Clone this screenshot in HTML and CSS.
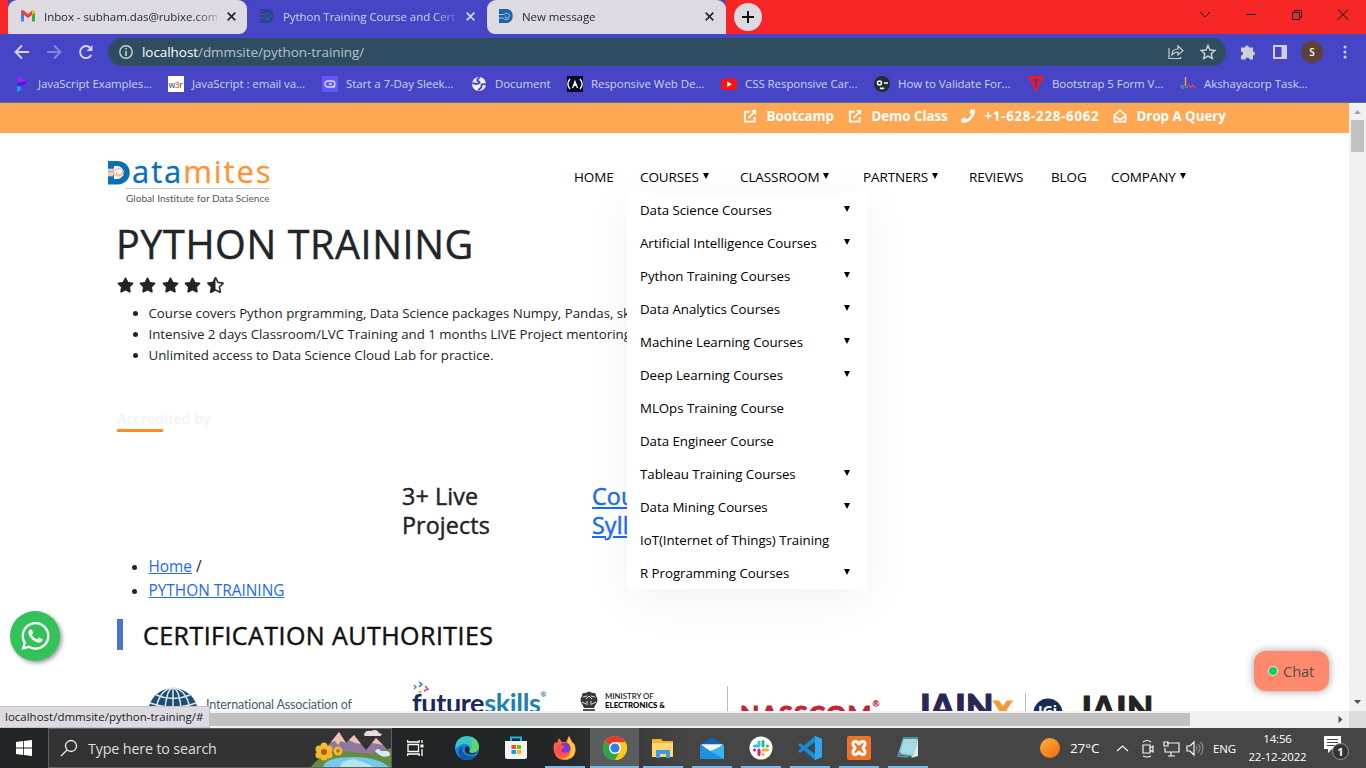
FILE: index.html
```html
<!DOCTYPE html>
<html lang="en">
<head>
<meta charset="utf-8">
<title>Python Training Course and Certification</title>
<link rel="stylesheet" href="styles.css">
</head>
<body>
<div class="desktop">
<header class="browser">
  <div class="tabstrip">
    <div class="tab tab-first">
      <svg class="fav" viewBox="0 0 16 16"><path d="M1 13.500V3.500L4 5.500V13.500z" fill="#4285f4"/><path d="M12 5.500L15 3.500V13.500H12z" fill="#34a853"/><path d="M1 3.500C1 2 3 2 4 2.700L8 6L12 2.700V7L8 10L1 5z" fill="#ea4335"/><path d="M12 2.700C13 2 15 2 15 3.500V5L12 7z" fill="#fbbc04"/></svg>
      <span class="tab-title ls-inbox">Inbox - subham.das@rubixe.com</span>
      <svg class="close" viewBox="0 0 9 9"><path d="M.7.7l7.600 7.600M8.300.7L.7 8.300"/></svg>
    </div>
    <div class="tab tab-active">
      <svg class="fav dim" viewBox="0 0 16 16"><path d="M1 1h7c9 0 9 14 0 14H1z" fill="#28448a"/><path d="M1 6.500h5c3-3 7 0 5 2.500s-5 0-3-1.500M1 10h4c2 2 4 2 6 .5" stroke="#3f68a8" fill="none"/></svg>
      <span class="tab-title ls-active">Python Training Course and Certification</span>
      <svg class="close" viewBox="0 0 9 9"><path d="M.7.7l7.600 7.600M8.300.7L.7 8.300"/></svg>
    </div>
    <div class="tab tab-last">
      <svg class="fav" viewBox="0 0 16 16"><path d="M1 1h7c9 0 9 14 0 14H1z" fill="#1e62ac"/><path d="M1 6.500h5c3-3 7 0 5 2.500s-5 0-3-1.500M1 10h4c2 2 4 2 6 .5" stroke="#9fbfe0" fill="none"/></svg>
      <span class="tab-title">New message</span>
      <svg class="close" viewBox="0 0 9 9"><path d="M.7.7l7.600 7.600M8.300.7L.7 8.300"/></svg>
    </div>
    <div class="newtab"><svg width="12" height="12" viewBox="0 0 12 12"><path d="M6 0v12M0 6h12" stroke="#111" stroke-width="2"/></svg></div>
    <svg class="winctl" width="144" height="12" viewBox="0 0 144 12" fill="none" stroke="#111"><path d="M1 4l5 5 5-5M47 6.500h10M93.500 4.500h7v7h-7zM95.500 4.500v-2h7v7h-2M139 1.500l10 10M149 1.500l-10 10"/></svg>
  </div>
  <div class="toolbar">
    <svg class="tb" viewBox="0 0 16 16"><path d="M15 8H2M8 1.500L1.500 8L8 14.500"/></svg>
    <svg class="tb faded" viewBox="0 0 16 16"><path d="M1 8h13M8 1.500L14.500 8L8 14.500"/></svg>
    <svg class="tb" viewBox="0 0 16 16"><path d="M13.300 11A6 6 0 1 1 12.500 4"/><path d="M14.500 1v6h-6z" fill="#cfcff0" stroke="none"/></svg>
    <div class="omnibox">
      <svg width="14" height="14" viewBox="0 0 14 14"><circle cx="7" cy="7" r="6.200" fill="none" stroke="#cbd3d8" stroke-width="1.400"/><path d="M7 6v5M7 3v1.600" stroke="#cbd3d8" stroke-width="1.600"/></svg>
      <span class="url"><b>localhost</b>/dmmsite/python-training/</span>
      <svg class="share" width="16" height="16" viewBox="0 0 16 16"><path d="M1 4v10.500h11.500V13M4 11C4 7 6 5 10 5V2l5 4.700L10 11V8C7 8 5.500 9 4 11z"/></svg>
      <svg class="share" width="16" height="16" viewBox="0 0 16 16"><path stroke-width="1.500" d="M8 1.500l2 4.600 4.900.4-3.700 3.200 1.100 4.800L8 12l-4.300 2.500 1.100-4.800L1.100 6.500 6 6.100z"/></svg>
    </div>
    <svg class="ext" width="16" height="16" viewBox="0 0 16 16"><path fill="#d0d0d8" d="M1 3.500h4a2 2 0 1 1 4 0h4v4a2 2 0 1 1 0 4v4H9.500a2 2 0 0 0-4 0H1v-4a2 2 0 0 0 0-4z"/></svg>
    <svg class="side" width="14" height="14" viewBox="0 0 14 14"><path d="M1 1h12v12H1z" fill="none" stroke="#d0d0d8" stroke-width="2"/><path d="M8.500 1H13v12H8.500z" fill="#d0d0d8"/></svg>
    <div class="avatar">S</div>
    <svg class="dots" width="4" height="14" viewBox="0 0 4 14" fill="#d0d0e8"><circle cx="2" cy="2" r="1.500"/><circle cx="2" cy="7" r="1.500"/><circle cx="2" cy="12" r="1.500"/></svg>
  </div>
  <nav class="bookmarks">
    <a><svg viewBox="0 0 16 16"><path d="M3 0l10 4-2 4-8-3.500z" fill="#9128ee"/><path d="M13 4l-2 4L3 11.500V8z" fill="#6510d6"/><path d="M3 9.500l4 1.500v3l-4 2z" fill="#08a4f5"/></svg><span>JavaScript Examples...</span></a>
    <a><svg viewBox="0 0 16 16"><path d="M0 0h16v16H0z" fill="#fff"/><text x="0.500" y="11.500" class="w3" fill="#56718f">w<tspan fill="#e5702d">3</tspan>r</text></svg><span>JavaScript : email va...</span></a>
    <a><svg viewBox="0 0 16 16"><path d="M0 0h16v16H0z" fill="#6057ff"/><path d="M13 11H6a3 3 0 1 1 0-6h4a3 3 0 0 1 0 6M7 8h3" fill="none" stroke="#dcdcff" stroke-width="1.300"/></svg><span>Start a 7-Day Sleek...</span></a>
    <a><svg viewBox="0 0 16 16"><circle cx="8" cy="8" r="7" fill="#f2f2fa"/><path d="M9 1.500C6 3 5 4.500 7.500 5.500S8 8 5 8L1.500 7M15 8.500c-4-1-5 0-4.500 2S8 12 7.500 14.500" fill="none" stroke="#4545c6" stroke-width="1.900"/></svg><span>Document</span></a>
    <a><svg viewBox="0 0 16 16"><path d="M0 0h16v16H0z" fill="#0a0a23"/><path d="M3 3C.500 6 .5 10 3 13M13 3c2.500 3 2.500 7 0 10M5.500 12L8 6l2.500 6" stroke="#fff" stroke-width="1.300" fill="none"/><path d="M8 4l2 6H6z" fill="#fff"/></svg><span>Responsive Web De...</span></a>
    <a><svg viewBox="0 0 16 16"><rect y="2.500" width="16" height="11.500" rx="3" fill="#f11"/><path d="M6.300 5.500v5.500l4.700-2.700z" fill="#fff"/></svg><span>CSS Responsive Car...</span></a>
    <a><svg viewBox="0 0 16 16"><circle cx="8" cy="8" r="8" fill="#262b38"/><circle cx="5.500" cy="7" r="2" fill="none" stroke="#fff" stroke-width="1.500"/><path d="M10 7h4M6 12q2 1 4 0" stroke="#fff" stroke-width="1.500" fill="none"/></svg><span>How to Validate For...</span></a>
    <a><svg viewBox="0 0 16 16"><path d="M0 0h16L8 16z" fill="#f51a1a"/><path d="M5 4h6M8 4v7" stroke="#5a2cae" stroke-width="1.800"/></svg><span>Bootstrap 5 Form V...</span></a>
    <a><svg viewBox="0 0 16 16"><path d="M0 10h4M1 12h3" stroke="#4d91b5" stroke-width="1.500" fill="none"/><path d="M5.500 1v9" stroke="#f0a32c" stroke-width="1.500"/><path d="M5 11.500h3" stroke="#3da35b" stroke-width="1.500"/><path d="M8 10.500q1-2 2 0t2 0 2 0 1.500 1" stroke="#d04d57" stroke-width="1.500" fill="none"/></svg><span>Akshayacorp Task...</span></a>
  </nav>
</header>

<div class="viewport">
  <main class="page">
    <div class="topbar">
      <a><svg viewBox="0 0 15 15"><path d="M7 3H2v10.500h10.500V8.500M6 9.500l7-7" fill="none" stroke="#fff" stroke-width="2"/><path d="M8.500 1H14v5.500z" fill="#fff"/></svg>Bootcamp</a>
      <a><svg viewBox="0 0 15 15"><path d="M7 3H2v10.500h10.500V8.500M6 9.500l7-7" fill="none" stroke="#fff" stroke-width="2"/><path d="M8.500 1H14v5.500z" fill="#fff"/></svg>Demo Class</a>
      <a class="phone"><svg viewBox="0 0 512 512"><path fill="#fff" d="M493.400 24.600l-104-24c-11.300-2.600-22.900 3.300-27.500 13.900l-48 112c-4.200 9.800-1.400 21.300 6.900 28l60.600 49.600c-36 76.700-98.900 140.500-177.200 177.200l-49.600-60.600c-6.800-8.300-18.200-11.100-28-6.900l-112 48C3.900 366.500-2 378.100.6 389.400l24 104C27.100 504.200 36.700 512 48 512c256.100 0 464-207.500 464-464 0-11.200-7.700-20.900-18.600-23.400z"/></svg>+1-628-228-6062</a>
      <a><svg viewBox="0 0 15 15"><path d="M1.500 6.500L7.500 1.500l6 5V13.500h-12zM1.500 7.500l6 4 6-4" fill="none" stroke="#fff" stroke-width="1.700" stroke-linejoin="round"/></svg>Drop A Query</a>
    </div>

    <div class="mainnav">
      <div class="brand">
        <div class="brand-row">
          <svg width="22" height="24" viewBox="0 0 22 24"><path d="M0 0h9c17 0 17 23.500 0 23.500H0z" fill="#0a70b6"/><path d="M6 5h3c8 0 8 13 0 13H6z" fill="#fff"/><path d="M0 9h7c4-3 9 0 7 3s-7 2-5-1M0 12h6c2 4 6 4 9 1M0 14h5" fill="none" stroke="#fff" stroke-width="2.500"/><path d="M0 9h7c4-3 9 0 7 3s-7 2-5-1M0 12h6c2 4 6 4 9 1M0 14h5" fill="none" stroke="#f5966c"/></svg>
          <span class="word">ata<i>mites</i></span>
        </div>
        <div class="tagline">Global Institute for Data Science</div>
      </div>
      <ul class="menu">
        <li>HOME</li><li>COURSES<s></s></li><li>CLASSROOM<s></s></li><li>PARTNERS<s></s></li><li>REVIEWS</li><li>BLOG</li><li>COMPANY<s></s></li>
      </ul>
      <ul class="dropdown">
        <li>Data Science Courses<s></s></li>
        <li>Artificial Intelligence Courses<s></s></li>
        <li>Python Training Courses<s></s></li>
        <li>Data Analytics Courses<s></s></li>
        <li>Machine Learning Courses<s></s></li>
        <li>Deep Learning Courses<s></s></li>
        <li>MLOps Training Course</li>
        <li>Data Engineer Course</li>
        <li>Tableau Training Courses<s></s></li>
        <li>Data Mining Courses<s></s></li>
        <li>IoT(Internet of Things) Training</li>
        <li>R Programming Courses<s></s></li>
      </ul>
    </div>

    <section class="content">
      <h1>PYTHON TRAINING</h1>
      <div class="stars">
        <svg viewBox="0 0 576 512"><use href="#star"/></svg><svg viewBox="0 0 576 512"><use href="#star"/></svg><svg viewBox="0 0 576 512"><use href="#star"/></svg><svg viewBox="0 0 576 512"><path id="star" d="M259.300 17.800L194 150.200 47.900 171.500c-26.200 3.800-36.700 36.100-17.700 54.600l105.700 103-25 145.500c-4.500 26.300 23.200 46 46.400 33.700L288 439.600l130.700 68.700c23.200 12.200 50.900-7.400 46.400-33.700l-25-145.500 105.700-103c19-18.500 8.500-50.800-17.700-54.600L382 150.200 316.700 17.800c-11.700-23.600-45.600-23.900-57.400 0z"/></svg><svg viewBox="0 0 536 512"><path d="M508.550 171.510L362.180 150.200 296.770 17.810C290.890 5.980 279.420 0 267.950 0c-11.400 0-22.790 5.900-28.690 17.810l-65.430 132.380-146.380 21.290c-26.250 3.800-36.770 36.090-17.740 54.590l105.890 103-25.060 145.480C86.980 495.330 103.570 512 122.150 512c4.930 0 10-1.170 14.870-3.750l130.950-68.680 130.940 68.700c4.860 2.550 9.920 3.710 14.830 3.710 18.600 0 35.220-16.610 31.660-37.400l-25.030-145.490 105.910-102.980c19.040-18.500 8.520-50.800-17.730-54.600zm-121.740 123.200l-18.120 17.620 4.280 24.880 19.520 113.450-102.130-53.590-22.380-11.740.03-317.190 51.030 103.290 11.180 22.630 25.010 3.640 114.230 16.630-82.650 80.380z"/></svg>
      </div>
      <ul class="points">
        <li>Course covers Python prgramming, Data Science packages Numpy, Pandas, sklearn</li>
        <li>Intensive 2 days Classroom/LVC Training and 1 months LIVE Project mentoring</li>
        <li>Unlimited access to Data Science Cloud Lab for practice.</li>
      </ul>
      <div class="accredited">Accredited by</div>
      <div class="facts">
        <h4>3+ Live<br>Projects</h4>
        <h4><a>Course<br>Syllabus</a></h4>
      </div>
      <ul class="crumbs"><li><a>Home</a> /</li><li><a>PYTHON TRAINING</a></li></ul>
      <h2><span>CERTIFICATION AUTHORITIES</span></h2>
      <div class="logos">
        <div class="iabac">
          <svg width="52" height="40" viewBox="0 0 52 40"><circle cx="26" cy="26" r="25" fill="#1e4e70"/><g fill="none" stroke="#d9e8f0" stroke-width="1.500"><ellipse cx="26" cy="26" rx="8" ry="25"/><ellipse cx="26" cy="26" rx="17" ry="25"/><path d="M26 1v30M9 8q17 7 34 0M3 16q23 8 46 0"/></g></svg>
          <span>International Association of</span>
        </div>
        <div class="future"><svg width="18" height="14" viewBox="0 0 18 14" fill="none" stroke-width="1.500"><path d="M2 4l2 2-2 2" stroke="#4a9b87"/><path d="M7 1l3 2-3 3" stroke="#237caf"/><path d="M13 5l3 3-4 2" stroke="#d14773"/><path d="M7 10l2 2" stroke="#eebb3c" stroke-width="3"/></svg><span>future<i>skills</i><sup>®</sup></span></div>
        <div class="ministry">
          <svg width="20" height="24" viewBox="0 0 20 24"><path d="M3 5q0-4 4-3q3-3 6 0q4-1 4 3q3 4 0 8l-2 4H5l-2-4q-3-4 0-8z" fill="#383838"/><path d="M4 6l4-1M12 5l4 1M7 8l3-3 3 3M3 11l4 2M13 13l4-2M8 10v4M12 10v4" stroke="#ddd" fill="none"/><path d="M4 18h12v4H4z" fill="#555"/></svg>
          <span>MINISTRY OF<b>ELECTRONICS &amp;</b></span>
        </div>
        <div class="nasscom">NASSCOM<sup>®</sup></div>
        <div class="jainx">JAIN<i>x</i></div>
        <div class="jain"><svg width="30" height="30" viewBox="0 0 30 30"><circle cx="15" cy="15" r="14.500" fill="#172b57"/><text x="5" y="18" class="jgi" fill="#fff">JGi</text></svg><span>JAIN</span></div>
      </div>
    </section>

    <div class="whatsapp"><svg width="29" height="32" viewBox="0 0 448 512"><path fill="#fff" d="M380.900 97.100C339 55.100 283.200 32 223.900 32c-122.400 0-222 99.600-222 222 0 39.100 10.200 77.300 29.600 111L0 480l117.700-30.900c32.400 17.700 68.900 27 106.100 27h.1c122.300 0 224.100-99.600 224.100-222 0-59.300-25.200-115-67.100-157zm-157 341.600c-33.200 0-65.700-8.900-94-25.700l-6.700-4-69.800 18.300L72 359.200l-4.400-7c-18.500-29.400-28.200-63.300-28.200-98.200 0-101.700 82.800-184.500 184.600-184.500 49.300 0 95.600 19.200 130.400 54.100 34.800 34.900 56.200 81.200 56.100 130.500 0 101.800-84.900 184.600-186.600 184.600zm101.200-138.200c-5.500-2.800-32.800-16.200-37.900-18-5.100-1.900-8.800-2.800-12.500 2.800-3.700 5.600-14.300 18-17.600 21.800-3.200 3.700-6.500 4.200-12 1.400-32.600-16.300-54-29.100-75.500-66-5.700-9.800 5.700-9.100 16.300-30.300 1.800-3.700.9-6.900-.5-9.700-1.400-2.800-12.500-30.100-17.100-41.200-4.500-10.800-9.100-9.300-12.500-9.500-3.200-.2-6.900-.2-10.600-.2-3.700 0-9.700 1.400-14.800 6.900-5.100 5.600-19.400 19-19.400 46.300 0 27.300 19.900 53.700 22.600 57.400 2.800 3.700 39.100 59.700 94.800 83.800 35.200 15.200 49 16.500 66.600 13.900 10.700-1.600 32.800-13.400 37.400-26.400 4.600-13 4.600-24.100 3.200-26.400-1.300-2.500-5-3.900-10.500-6.600z"/></svg></div>
    <div class="chat"><em></em>Chat</div>
  </main>
  <div class="vscroll">
    <svg width="17" height="17" viewBox="0 0 17 17"><path d="M5 11l3.500-4 3.500 4z" fill="#a3a3a3"/></svg>
    <div class="vthumb"></div>
    <svg class="down" width="17" height="17" viewBox="0 0 17 17"><path d="M5 6l3.500 4L12 6z" fill="#505050"/></svg>
  </div>
  <div class="hscroll"><div class="hthumb"></div><svg width="17" height="17" viewBox="0 0 17 17"><path d="M6.500 5l4 3.500-4 3.500z" fill="#505050"/></svg></div>
  <div class="corner"></div>
  <div class="status">localhost/dmmsite/python-training/#</div>
</div>

<footer class="taskbar">
  <div class="start"><svg width="16" height="16" viewBox="0 0 16 16" fill="#fff"><path d="M0 2l7-1v6.600H0zM7.800.9L16 0v7.600H7.800zM0 8.400h7V15l-7-1zM7.800 8.400H16V16l-8.200-1z"/></svg></div>
  <div class="search">
    <svg width="18" height="18" viewBox="0 0 18 18" fill="none" stroke="#eee" stroke-width="1.300"><circle cx="11" cy="7" r="5.500"/><path d="M7 11l-6 6"/></svg>
    <span>Type here to search</span>
    <svg class="scene" width="80" height="38" viewBox="0 0 80 38"><path d="M8 28L28 3l7 11 8-8 12 15 10-12 15 15v9H8z" fill="#8d789f"/><path d="M20 13l8-10 7 11-5-2-3 4-3-4zM38 11l5-5 7 9-6-1zM61 14l4-5 7 7-5-1z" fill="#f2bfb1"/><path d="M53 6q1-5 7-4 6-3 8 2 5 1 1 3H54z" fill="#eed8e0"/><path d="M0 38q15-20 42-15 18 4 38-4v19z" fill="#668b42"/><path d="M12 38q2-10 30-10 25 0 36 10z" fill="#76c9e8"/><path d="M30 38q-2-5 12-8 15 4 20 8z" fill="#b5e5f1"/><path d="M64 22q3-4 6 0h6q5 2 2 5-7 3-14-5z" fill="#d5e9f6"/><g fill="#f6b92b"><circle cx="13" cy="17" r="3.500"/><circle cx="18" cy="20" r="3.500"/><circle cx="18" cy="26" r="3.500"/><circle cx="13" cy="28" r="3.500"/><circle cx="8" cy="26" r="3.500"/><circle cx="8" cy="20" r="3.500"/><circle cx="27" cy="22" r="4.500"/></g><circle cx="13" cy="23" r="3" fill="#a86116"/><circle cx="27" cy="22" r="1.700" fill="#a86116"/></svg>
  </div>
  <div class="taskview"><svg width="17" height="16" viewBox="0 0 17 16" fill="none" stroke="#fff" stroke-width="1.300"><path d="M1 4.500h10.500v7H1zM.6 0v2h11.500V0M.6 16v-2h11.500v2M15 0v3M15 9v7"/><path d="M13.500 4.500h3v3h-3z" fill="#fff" stroke="none"/></svg></div>
  <div class="apps">
    <div><svg viewBox="0 0 24 24"><circle cx="12" cy="12" r="12" fill="#1686d9"/><path d="M1 8C4-3 23-2 24 10c0 6-6 8-10 6 3-3 1-8-4-8-4 0-7 2-10 5z" fill="#39c5c7"/><path d="M15 1c8 2 10 10 8 13-3 3-7 3-9 2 4-3 4-9 1-15z" fill="#65d46b"/><path d="M8 10c-3 6 3 12 13 10-5 6-14 5-17-1-2-5 1-8 4-9z" fill="#1257a5"/><path d="M12 10c3 1 3 4 2 6 2 2 6 1 8 0-3 4-11 3-12-1-.5-3 0-4 2-5z" fill="#22292b"/></svg></div>
    <div><svg viewBox="0 0 24 24"><path d="M7 6V1.500h10V6" fill="none" stroke="#1cb0f4" stroke-width="2"/><path d="M1 5h22v16q0 2-2 2H3q-2 0-2-2z" fill="#f3f3f3"/><path d="M7.500 9H12v4H7.500z" fill="#f25022"/><path d="M13 9h4v4h-4z" fill="#7fba00"/><path d="M7.500 14H12v4H7.500z" fill="#00a4ef"/><path d="M13 14h4v4h-4z" fill="#ffb900"/></svg></div>
    <div class="run"><svg viewBox="0 0 24 24"><path d="M2 6l2 1 2-5 3 4 4 0 3-6 3 6 3 3c4 18-19 20-21 6-1-4 0-7 1-9z" fill="#ff6a32"/><path d="M16 0l3 6 2 2c5 12-5 18-12 14 8 1 12-8 5-16z" fill="#ffc638"/><circle cx="12" cy="12" r="5.500" fill="#753bd2"/><path d="M4 8l5 1 3 2-4 3c1 4 6 3 8 1-1 8-12 7-14 0z" fill="#fe4d5a"/></svg></div>
    <div class="run on"><svg viewBox="0 0 24 24"><circle cx="12" cy="12" r="12" fill="#fbc719"/><path d="M12 12L1.600 6A12 12 0 0 1 22.400 6z" fill="#e43b2e"/><path d="M12 12L1.600 6A12 12 0 0 0 12 24l5-9z" fill="#29a64b"/><path d="M12 6h10.400A12 12 0 0 1 12 24l5-9z" fill="#fbc719"/><circle cx="12" cy="12" r="6" fill="#fff"/><circle cx="12" cy="12" r="4.600" fill="#347ee9"/></svg></div>
    <div class="run"><svg viewBox="0 0 24 24"><path d="M1 3h9l2 2h10v16H1z" fill="#edb62f"/><path d="M1 7h21v14H1z" fill="#ffd86b"/><path d="M5 22v-8h14v8h-4v-4H9v4z" fill="#3b9ae1"/></svg></div>
    <div class="run"><svg viewBox="0 0 24 24"><path d="M0 9L12 1l12 8v14H0z" fill="#1462aa"/><path d="M1 8.500h22L12 17z" fill="#f4f4f4"/><path d="M0 9l10 6L24 9v14H0z" fill="#35b8ef"/><path d="M1 8.500h22L12 14.500z" fill="#f4f4f4"/><path d="M0 23V9l24 14z" fill="#1e90e0"/></svg></div>
    <div class="run"><svg viewBox="0 0 24 24" stroke-width="3" stroke-linecap="round"><circle cx="12" cy="12" r="11.500" fill="#fff"/><path d="M10 6v4M5.500 10H10" stroke="#36c5f0"/><path d="M14 5.500V10M18.500 10h-.1" stroke="#2eb67d"/><path d="M14 14h4.500M14 18.500v-.1" stroke="#ecb22e"/><path d="M10 14v4.500M5.500 14h.1" stroke="#e01e5a"/></svg></div>
    <div class="run"><svg viewBox="0 0 24 24"><path d="M17 0l7 3v18l-7 3L0 9l2-2 15 11V6L2 17l-2-2z" fill="#168cd3"/><path d="M17 0l7 3v18l-7 3z" fill="#31a8ee"/></svg></div>
    <div class="run"><svg viewBox="0 0 24 24"><rect width="24" height="24" rx="2" fill="#ee7425"/><path d="M6 8c0-4 5-3 6 1 1-4 6-5 6-1 0 2-2 3-2 4s2 2 2 4c0 4-5 3-6-1-1 4-6 5-6 1 0-2 2-3 2-4S6 10 6 8z" fill="none" stroke="#fff" stroke-width="3"/></svg></div>
    <div class="run"><svg viewBox="0 0 24 24"><path d="M7 2h15l-4 19-16-3z" fill="#77bcc9"/><path d="M8 3h13l-3 16-14-2z" fill="#a4dce5"/><path d="M22 2v18l-7 2 3-4z" fill="#e8e8e4"/><path d="M7 2h15M4 16L2 20l10 1" stroke="#568e9a" stroke-width="2" fill="none"/></svg></div>
  </div>
  <div class="sun"></div><span class="temp">27°C</span>
  <svg class="tray" width="86" height="18" viewBox="0 0 86 18" fill="none" stroke="#f4f4f4" stroke-width="1.200"><path d="M0 12l5.500-5 5.500 5M26 6h7v8h-7zM33 9l3-2v6l-3-2M26 3q4-3 8 0M26 17q4 2 8 0M50 4h12v9H48V9M47 3h4v4h-4zM54 13v4M51 17h7M70 7h3l4-4v13l-4-4h-3z"/><path d="M79 7q2 2 0 5M81 5q4 4 0 9M83.500 3q5 6 0 13" stroke="#888"/></svg>
  <span class="lang">ENG</span>
  <div class="clock"><span>14:56</span><span>22-12-2022</span></div>
  <div class="notice"><svg width="17" height="18" viewBox="0 0 17 18"><path d="M0 0h17v13H8l-4 4v-4H0z" fill="#fff"/><path d="M3 3.500h11M3 6.500h11M3 9.500h8" stroke="#444"/></svg><b>1</b></div>
</footer>
</div>
</body>
</html>
```
FILE: styles.css
```css
* { box-sizing: border-box; }
body { margin: 0; font-family: "Open Sans", "Noto Sans", sans-serif; }
ul { margin: 0; padding: 0; list-style: none; }
h1, h2, h4 { margin: 0; font-weight: 400; -webkit-text-stroke: .45px currentColor; }
i { font-style: normal; }
svg { display: block; flex: none; }
.desktop { width: 1366px; height: 768px; overflow: hidden; display: flex; flex-direction: column; background: #fff; }

/* browser chrome */
.browser { height: 103px; background: #4545c6; border-bottom: 1px solid #55758a; }
.tabstrip { display: flex; height: 34px; padding-left: 8px; background: linear-gradient(90deg, #f82727 0 8px, transparent 8px 725px, #f62626 725px); background-color: #4545c6; align-items: flex-start; }
.tab { width: 239px; height: 34px; padding: 0 11px 2px 12px; display: flex; align-items: center; font-size: 11.500px; color: #28282c; background: #dddae2; border-radius: 9px 9px 8px 8px; }
.tab-first { border-bottom-left-radius: 0; }
.tab-last { border-bottom-right-radius: 0; padding-left: 11px; padding-right: 12px; }
.tab-active { width: 240px; color: #d4d4f0; background: #4545c6; padding-right: 12px; }
.fav { width: 16px; height: 16px; margin-right: 8px; }
.dim { opacity: .9; }
.tab-title { flex: 1; white-space: nowrap; overflow: hidden; letter-spacing: -.06px; margin-right: 10px; -webkit-mask-image: linear-gradient(90deg, #000 150px, transparent 180px); }
.close { width: 9px; height: 9px; stroke: currentColor; stroke-width: 1.700; }
.newtab { width: 28px; height: 28px; margin: 3px 0 0 8px; border-radius: 50%; background: #dddae2; display: flex; align-items: center; justify-content: center; }
.winctl { margin: 8px 0 0 437px; overflow: visible; }
.toolbar { height: 36px; display: flex; align-items: center; padding-left: 14px; }
.tb { width: 16px; height: 16px; margin-right: 16px; fill: none; stroke: #d6d6e8; stroke-width: 1.900; }
.faded { opacity: .45; }
.omnibox { width: 1118px; height: 28px; margin-left: -2px; padding: 0 10px 0 11px; border-radius: 14px; background: #2f4d61; display: flex; align-items: center; }
.url { flex: 1; margin-left: 9px; font-size: 13.500px; letter-spacing: -.06px; color: #b6c1c9; }
.url b { color: #fff; font-weight: 400; }
.share { margin-left: 16px; fill: none; stroke: #c4ced5; stroke-width: 1.200; }
.ext { margin-left: 14px; }
.side { margin-left: 17px; }
.avatar { width: 22px; height: 22px; margin-left: 14px; border-radius: 50%; background: #5d4037; color: #fff; font-size: 10px; font-weight: 600; display: flex; align-items: center; justify-content: center; }
.dots { margin-left: 20px; }
.bookmarks { display: grid; grid-template-columns: 154px 154px 149px 96px 154px 153px 154px 152px 140px; height: 27px; padding-left: 14px; align-items: center; font-size: 11.500px; color: #d0d0ee; }
.bookmarks a { display: flex; align-items: center; white-space: nowrap; letter-spacing: -.07px; }
.bookmarks svg { width: 16px; height: 16px; margin-right: 8px; }
.w3 { font-size: 8.500px; font-weight: 600; letter-spacing: -.5px; }

/* page viewport and scrollbars */
.viewport { position: relative; height: 625px; display: grid; grid-template: 608px 17px / 1349px 17px; }
.page { position: relative; overflow: hidden; background: #fff; color: #212529; }
.topbar { height: 30px; padding: 0 0 4px 743px; display: grid; grid-template-columns: 105px 113px 152px 120px; align-items: center; background: #fea854; color: #fff; font-size: 13.300px; font-weight: 700; }
.topbar a { display: flex; align-items: center; white-space: nowrap; }
.topbar svg { width: 14px; height: 14px; margin-right: 9.500px; }
.phone { letter-spacing: .72px; }
.mainnav { position: relative; height: 87px; display: flex; padding: 26px 0 0 107px; color: #000; }
.brand { width: 467px; }
.brand-row { display: flex; height: 29px; align-items: flex-end; padding: 0 0 3px 1px; }
.word { font-size: 31px; line-height: 32px; height: 30px; letter-spacing: 1.900px; color: #0a70b6; margin-left: 2px; -webkit-text-stroke: .3px currentColor; }
.word i { color: #fb9537; }
.tagline { width: 144px; margin-left: 19px; padding-top: 2px; border-top: 1px solid #ccc; font: 10px/14px Lato, sans-serif; letter-spacing: .05px; color: #555; white-space: nowrap; }
.menu { display: grid; grid-template-columns: 66px 100px 123px 106px 82px 60px 100px; height: 35px; align-items: center; font-size: 13.500px; }
.menu li { display: flex; white-space: nowrap; letter-spacing: -.1px; }
s { width: 0; height: 0; border: 3.500px solid transparent; border-top: 6px solid #000; border-bottom: 0; }
.menu s { margin: 5px 0 0 4px; }
.dropdown { position: absolute; z-index: 2; left: 627px; top: 60px; width: 240px; background: #fff; box-shadow: 0 10px 50px rgba(0,0,0,.055); font-size: 13.300px; letter-spacing: -.04px; }
.dropdown li { height: 33px; padding: 1px 17px 0 13px; display: flex; align-items: center; justify-content: space-between; }
.dropdown s { margin-top: -3px; }

.content { padding-left: 117px; }
h1 { height: 50px; font-size: 39.500px; line-height: 49px; letter-spacing: .6px; margin-left: -1px; }
.stars { display: flex; gap: 5.400px; height: 16px; margin: 7px 0 10px 0; fill: #212529; }
.stars svg { width: 17px; height: 16px; }
.points { padding-left: 31.500px; list-style: disc; font-size: 13.300px; line-height: 21px; letter-spacing: -.02px; white-space: nowrap; }
.accredited { width: 46px; height: 27px; margin-top: 39px; border-bottom: 3px solid #fd8824; font-size: 14.300px; font-weight: 600; color: #f3f3f5; white-space: nowrap; line-height: 27px; }
.facts { display: grid; grid-template-columns: 190px 200px; padding: 50px 0 0 285px; }
h4 { font-size: 23.300px; line-height: 28.800px; letter-spacing: .1px; }
.facts a, .crumbs a { color: #1d6bf5; text-decoration: underline; }
.crumbs { margin-top: 15px; padding-left: 31.500px; list-style: disc; font-size: 15.400px; line-height: 24px; }
h2 { height: 31px; margin-top: 16px; padding: 0 0 0 20px; border-left: 6px solid #4776cf; color: #111; font-size: 25px; line-height: 33px; letter-spacing: .45px; }
.logos { display: grid; grid-template-columns: 264px 168px 148px 0 182px 116px 200px; margin-top: 31px; padding-left: 30px; }
.iabac { display: flex; padding-top: 6px; }
.iabac span { margin: 10px 0 0 7px; font: 12.500px Lato, sans-serif; letter-spacing: -.15px; color: #41606e; white-space: nowrap; }
.future { margin-left: 1px; }
.future span { display: block; margin-top: -7px; font: 700 27px/29px Lato, sans-serif; color: #20275f; letter-spacing: -.35px; }
.future i { color: #1c7fb8; }
.future sup, .nasscom sup { font-size: 9px; vertical-align: top; line-height: 12px; letter-spacing: 0; }
.future sup { color: #1c7fb8; font-size: 7px; }
.ministry { display: flex; padding-top: 10px; }
.ministry span { margin-left: 6px; font: 600 7.800px/9px Lato, sans-serif; color: #222; padding-top: 1px; white-space: nowrap; }
.ministry b { display: block; color: #000; font-weight: 900; letter-spacing: .05px; }
.nasscom { grid-column: 5; height: 60px; margin-top: 5px; padding: 12px 0 0 12px; border-left: 1px solid #bbb; color: #c92035; font: 900 25px/32px Lato, sans-serif; letter-spacing: 1.100px; -webkit-text-stroke: .8px #c92035; white-space: nowrap; }
.nasscom sup { -webkit-text-stroke: 0; }
.jainx { padding-top: 5px; padding-left: 11px; margin-left: -5px; font: 900 36px/40px Lato, sans-serif; color: #292554; letter-spacing: -.2px; white-space: nowrap; -webkit-text-stroke: 1px currentColor; }
.jainx i { color: #f39b3c; }
.jain { display: flex; margin-top: 12px; padding-left: 2px; border-left: 1px solid #bbb; }
.jain svg { margin: 5px 14px 0 5px; }
.jain span { font: 900 34px/34px Lato, sans-serif; color: #222; letter-spacing: .5px; -webkit-text-stroke: 1px currentColor; margin-top: -2px; }
.jgi { font-size: 14px; font-weight: 700; }

.whatsapp { position: absolute; left: 10px; top: 508px; width: 50px; height: 50px; border-radius: 50%; background: #33c159; box-shadow: 2px 2px 4px #999; display: flex; align-items: center; justify-content: center; }
.chat { position: absolute; left: 1254px; top: 548px; width: 75px; height: 40px; border-radius: 12px; background: #ff896d; box-shadow: 0 0 9px #999; display: flex; align-items: center; padding-left: 14px; gap: 5px; font-size: 14.700px; letter-spacing: -.1px; color: #505050; }
.chat em { width: 10px; height: 10px; border: 1px solid #e2f5db; border-radius: 50%; background: #0acb5d; }
.vscroll { background: #f1f1f1; display: flex; flex-direction: column; align-items: center; }
.vthumb { width: 13px; height: 32px; background: #c1c1c1; }
.down { margin-top: auto; }
.hscroll { background: #f1f1f1; display: flex; align-items: center; justify-content: space-between; }
.hthumb { width: 1190px; height: 13px; background: #c1c1c1; }
.corner { background: #dcdcdc; }
.status { position: absolute; left: 0; top: 603px; width: 210px; height: 22px; padding-left: 5px; border: 1px solid #c4c2c8; border-left: 0; background: #dddae2; font-size: 11.500px; line-height: 20px; letter-spacing: 0; color: #222; white-space: nowrap; }

/* desktop taskbar */
.taskbar { height: 40px; display: flex; align-items: center; background: linear-gradient(90deg, #212525 0 40%, #454545 50%); color: #fff; }
.start { width: 48px; display: flex; justify-content: center; }
.search { width: 344px; height: 40px; display: flex; align-items: center; padding-left: 11px; border: 1px solid #606060; background: #333; color: #dedede; font-size: 14.300px; }
.search span { margin-left: 10px; white-space: nowrap; letter-spacing: -.15px; }
.scene { margin-left: auto; }
.taskview { width: 51px; padding-left: 15px; }
.apps { display: flex; height: 40px; }
.apps div { width: 40px; margin: 0 5px 0 4px; display: flex; align-items: center; justify-content: center; }
.apps svg { width: 24px; height: 24px; }
.apps .run { border-bottom: 2px solid #76b9ed; padding-top: 2px; }
.apps .on { width: 49px; margin: 0; background: #5a5d5e; }
.sun { width: 20px; height: 20px; margin-left: 107px; border-radius: 50%; background: linear-gradient(140deg, #fbb034, #f26a13); }
.temp { width: 47px; margin-left: 10px; font-size: 13.500px; letter-spacing: -.1px; }
.tray { overflow: visible; }
.lang { margin-left: 10px; width: 24px; font-size: 11.500px; letter-spacing: -.1px; }
.clock { width: 59px; margin-left: 11px; display: flex; flex-direction: column; align-items: center; font-size: 11.500px; line-height: 18px; letter-spacing: -.2px; white-space: nowrap; }
.notice { display: flex; margin-left: 17px; }
.notice b { width: 17px; height: 17px; margin: 7px 0 0 -9px; border: 1px solid #999; border-radius: 50%; background: #333; font-size: 11px; line-height: 15px; text-align: center; }
```
